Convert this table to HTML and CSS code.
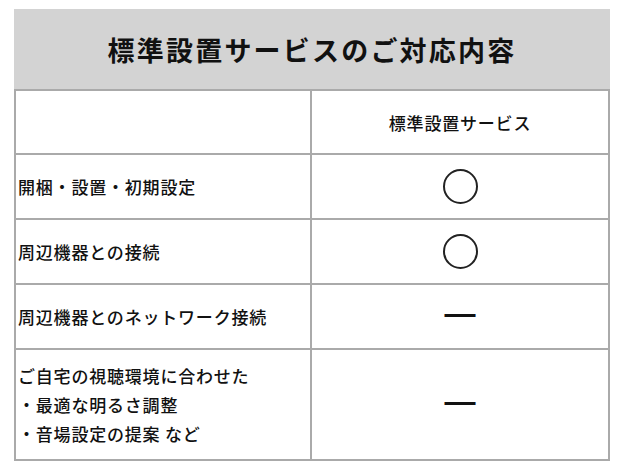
FILE: index.html
```html
<!DOCTYPE html>
<html lang="ja">
<head>
<meta charset="utf-8">
<title>標準設置サービスのご対応内容</title>
<link rel="stylesheet" href="styles.css">
</head>
<body>
<div class="wrap">
  <h2 class="title">標準設置サービスのご対応内容</h2>
  <table class="spec">
    <colgroup><col class="c1"><col class="c2"></colgroup>
    <tr class="head">
      <th></th>
      <th>標準設置サービス</th>
    </tr>
    <tr class="row">
      <td class="label">開梱・設置・初期設定</td>
      <td class="mark"><span class="circle" aria-label="〇"></span></td>
    </tr>
    <tr class="row">
      <td class="label">周辺機器との接続</td>
      <td class="mark"><span class="circle" aria-label="〇"></span></td>
    </tr>
    <tr class="row">
      <td class="label">周辺機器とのネットワーク接続</td>
      <td class="mark"><span class="dash">—</span></td>
    </tr>
    <tr class="row tall">
      <td class="label multi">ご自宅の視聴環境に合わせた<br>・最適な明るさ調整<br>・音場設定の提案 など</td>
      <td class="mark"><span class="dash">—</span></td>
    </tr>
  </table>
</div>
</body>
</html>
```

FILE: styles.css
```css
html, body {
  margin: 0;
  padding: 0;
  background: #ffffff;
}
body {
  font-family: "Noto Sans CJK JP", "Noto Sans", sans-serif;
  color: #111111;
}
.wrap {
  width: 596px;
  margin: 9px 0 0 14px;
}
.title {
  margin: 0;
  height: 80px;
  background: #d3d3d3;
  display: flex;
  align-items: center;
  justify-content: center;
  font-size: 27px;
  font-weight: 700;
  letter-spacing: 2.2px;
  color: #111111;
}
.spec {
  width: 596px;
  border-collapse: collapse;
  table-layout: fixed;
  font-size: 17px;
  font-weight: 500;
  letter-spacing: 0.8px;
}
.spec col.c1 { width: 296px; }
.spec col.c2 { width: 298px; }
.spec th, .spec td {
  border: 2px solid #aaaaaa;
  padding: 0 2px;
  vertical-align: middle;
}
.spec th {
  font-weight: 500;
  text-align: center;
}
.head { height: 64px; }
.row { height: 65px; }
.row.tall { height: 111px; }
.label {
  text-align: left;
}
.multi {
  line-height: 29px;
  padding-bottom: 6px;
}
.mark {
  text-align: center;
}
.circle {
  display: inline-block;
  width: 31px;
  height: 31px;
  border: 2px solid #222;
  border-radius: 50%;
  vertical-align: middle;
}
.dash {
  display: inline-block;
  font-family: "Liberation Sans", sans-serif;
  font-size: 31px;
  line-height: 30px;
  letter-spacing: 0;
  font-weight: 700;
  color: #111111;
  padding-bottom: 6px;
}
```
